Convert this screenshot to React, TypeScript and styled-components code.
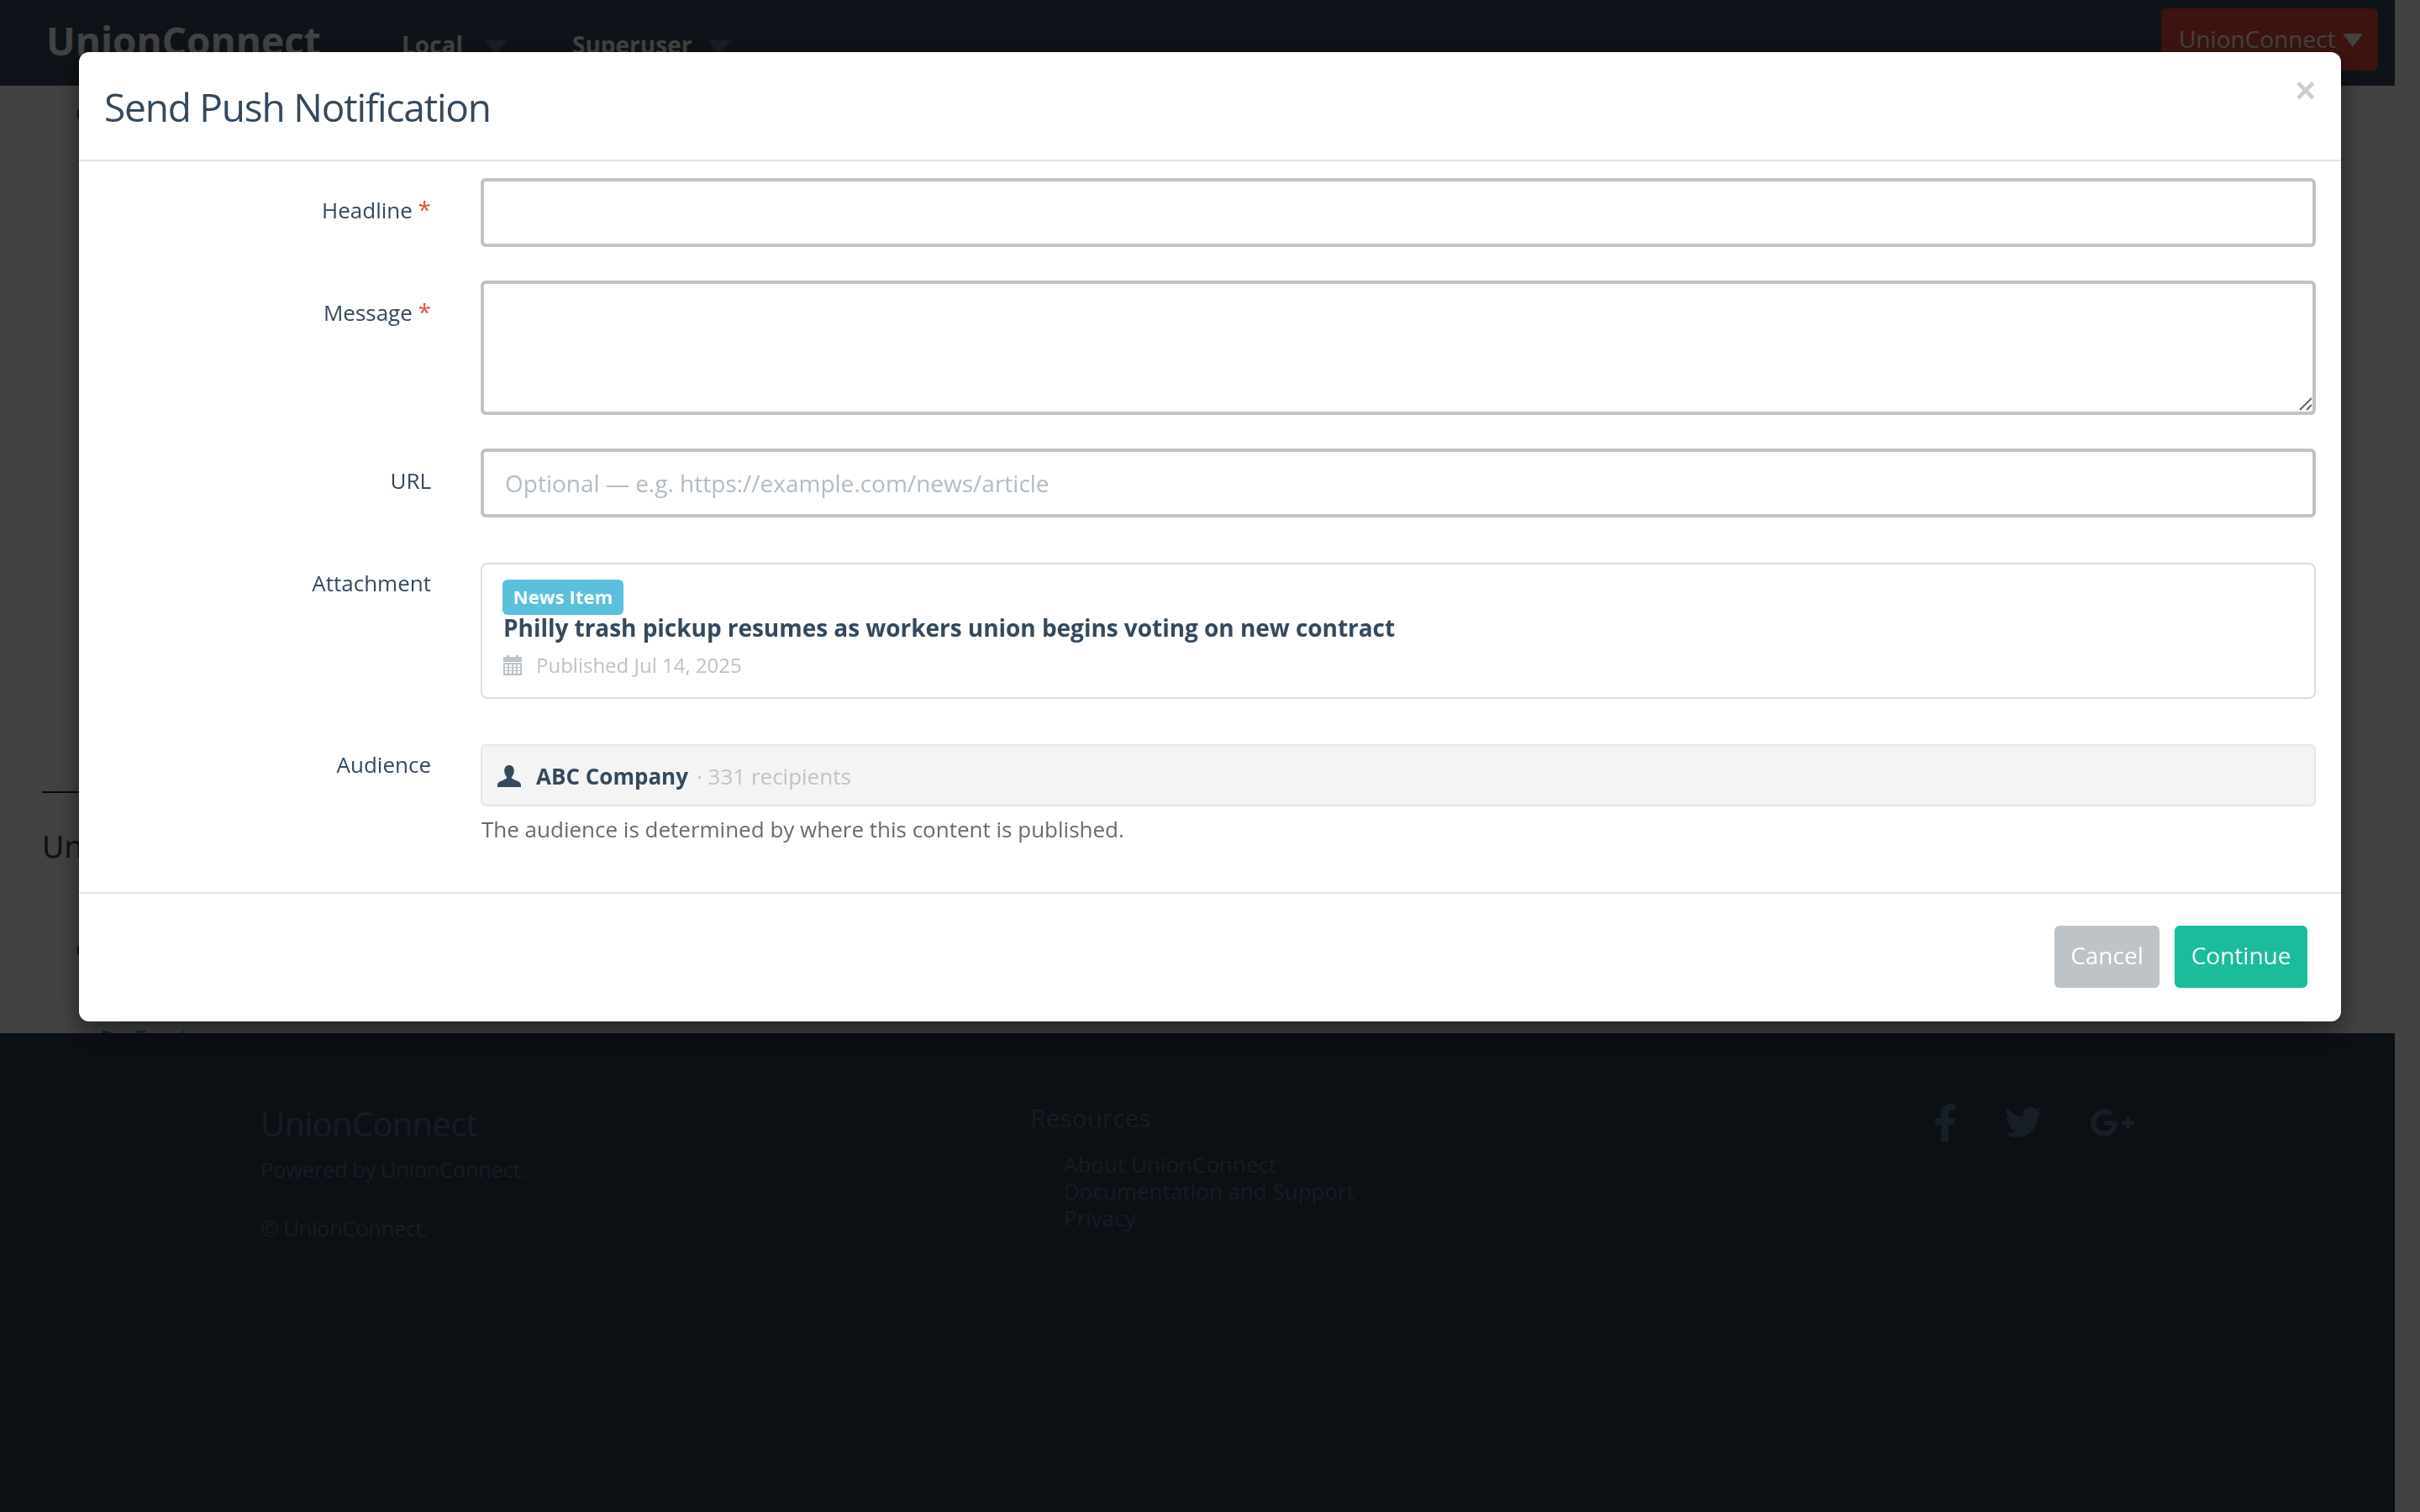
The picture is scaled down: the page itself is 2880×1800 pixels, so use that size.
import { styled, createGlobalStyle } from 'styled-components'
import { FaFacebookF, FaTwitter, FaGooglePlusG, FaRss } from 'react-icons/fa'

const GlobalStyle = createGlobalStyle`
  html, body {
    margin: 0;
    height: 1800px;
    overflow: hidden;
    background: #fff;
    font-family: "Open Sans", "Noto Sans", sans-serif;
  }

  * {
    box-sizing: border-box;
  }
`

const Page = styled.div`
  width: 2850px;
  height: 1800px;
  display: flex;
  flex-direction: column;
  color: #34495e;
`

const Navbar = styled.header`
  height: 102px;
  flex: none;
  display: flex;
  align-items: center;
  padding: 0 20px 0 55px;
  background: #34495e;
  color: #fff;
`

const Brand = styled.div`
  width: 423px;
  font-size: 46px;
  font-weight: 700;
  line-height: 1;
  margin-bottom: 6px;
`

const NavItem = styled.div<{ $gap: number }>`
  display: flex;
  align-items: center;
  gap: ${(p) => p.$gap}px;
  margin-right: 78px;
  font-size: 28px;
  font-weight: 700;
  line-height: 1;
  padding-top: 4px;
`

const NavCaret = styled.span`
  border-left: 13px solid transparent;
  border-right: 13px solid transparent;
  border-top: 18px solid #5a7690;
  margin-top: 8px;
`

const AccountButton = styled.div`
  margin-left: auto;
  margin-bottom: 8px;
  width: 258px;
  height: 74px;
  display: flex;
  align-items: center;
  gap: 8px;
  padding: 0 0 2px 21px;
  border-radius: 6px;
  background: #e74c3c;
  font-size: 28px;
`

const AccountCaret = styled.span`
  border-left: 12px solid transparent;
  border-right: 12px solid transparent;
  border-top: 16px solid #fff;
  margin-top: 4px;
`

const Main = styled.main`
  height: 1128px;
  flex: none;
  overflow: hidden;
  padding: 17px 0 0 50px;
`

const StubText = styled.div<{ $top: number }>`
  margin-top: ${(p) => p.$top}px;
  padding-left: 40px;
  font-size: 26px;
  line-height: 32px;
`

const Rule = styled.hr`
  width: 1000px;
  margin: 791px 0 0;
  border: none;
  border-top: 2px solid #222;
`

const SectionHeading = styled.h2`
  margin: 43px 0 0;
  font-family: "DejaVu Sans", sans-serif;
  font-size: 36px;
  font-weight: 400;
  line-height: 44px;
`

const FeedLink = styled.div`
  display: flex;
  align-items: center;
  gap: 14px;
  margin-top: 77px;
  padding-left: 70px;
  color: #1abc9c;
  font-family: "DejaVu Sans", sans-serif;
  font-size: 26px;
`

const SiteFooter = styled.footer`
  flex: 1;
  display: grid;
  grid-template-columns: 916px 1075px 1fr;
  align-content: start;
  padding: 84px 0 0 310px;
  background: #2c3e50;
  color: #556c8e;
  font-size: 26px;
  line-height: 32px;
`

const FooterBrand = styled.div`
  font-size: 40px;
  line-height: 48px;
  letter-spacing: -0.7px;
`

const FooterNote = styled.p`
  margin: 14px 0 38px;
  letter-spacing: -0.6px;
`

const FooterCopy = styled.div`
  letter-spacing: -0.6px;
`

const FooterHeading = styled.div`
  font-size: 30px;
  line-height: 34px;
  margin-bottom: 22px;
`

const FooterLinks = styled.ul`
  margin: 0;
  padding: 0 0 0 40px;
  list-style: none;
`

const Socials = styled.div`
  display: flex;
  align-items: center;
  height: 44px;
  color: #5c7394;
`

const FacebookIcon = styled(FaFacebookF)`
  width: 28px;
  height: 45px;
  margin-right: 57px;
`

const TwitterIcon = styled(FaTwitter)`
  width: 44px;
  height: 44px;
  margin-right: 57px;
`

const GooglePlusIcon = styled(FaGooglePlusG)`
  width: 54px;
  height: 43px;
`

const Backdrop = styled.div`
  position: fixed;
  inset: 0;
  background: rgba(0, 0, 0, 0.74);
`

const Modal = styled.div`
  position: fixed;
  top: 62px;
  left: 94px;
  right: 94px;
  height: 1154px;
  display: flex;
  flex-direction: column;
  background: #fff;
  border-radius: 12px;
  box-shadow: 0 10px 30px rgba(0, 0, 0, 0.5);
  color: #34495e;
`

const ModalHeader = styled.div`
  height: 130px;
  flex: none;
  display: flex;
  justify-content: space-between;
  align-items: flex-start;
  padding: 0 30px;
  border-bottom: 2px solid #e5e5e5;
`

const ModalTitle = styled.h4`
  margin: 35px 0 0;
  font-size: 46px;
  font-weight: 400;
  line-height: 60px;
  letter-spacing: -1.2px;
`

const CloseButton = styled.button`
  margin-top: 20px;
  padding: 0;
  border: none;
  background: none;
  color: #cdcdcd;
  font-family: "Liberation Sans", sans-serif;
  font-size: 42px;
  font-weight: 700;
  line-height: 52px;
`

const FormGrid = styled.div`
  flex: 1;
  display: grid;
  grid-template-columns: 389px 1fr;
  column-gap: 59px;
  align-content: start;
  padding: 20px 30px 0;
`

const Label = styled.label<{ $pad?: number }>`
  text-align: right;
  font-size: 26px;
  line-height: 36px;
  padding-top: ${(p) => p.$pad ?? 20}px;
`

const Required = styled.span`
  color: #e74c3c;
  font-size: 28px;
  line-height: 1;
`

const Field = styled.div<{ $gap: number }>`
  margin-bottom: ${(p) => p.$gap}px;
`

const TextInput = styled.input`
  display: block;
  width: 100%;
  height: 82px;
  padding: 0 25px;
  border: 4px solid #bdc3c7;
  border-radius: 6px;
  background: #fff;
  color: #34495e;
  font-family: inherit;
  font-size: 28px;
  outline: none;

  &::placeholder {
    color: #b2bcc5;
    opacity: 1;
  }
`

const TextAreaWrap = styled.div`
  position: relative;
`

const TextArea = styled.textarea`
  display: block;
  width: 100%;
  height: 160px;
  padding: 12px 24px;
  border: 4px solid #bdc3c7;
  border-radius: 6px;
  resize: none;
  outline: none;
`

const ResizeGrip = styled.svg`
  position: absolute;
  right: 4px;
  bottom: 5px;
`

const AttachmentCard = styled.div`
  height: 162px;
  padding: 18px 24px 0;
  border: 2px solid #ddd;
  border-radius: 8px;
`

const Badge = styled.span`
  display: block;
  width: 144px;
  height: 42px;
  border-radius: 6px;
  background: #5bc0de;
  color: #fff;
  font-size: 22px;
  font-weight: 700;
  line-height: 40px;
  letter-spacing: 0.1px;
  text-align: center;
`

const AttachmentTitle = styled.div`
  margin-top: -3px;
  padding-left: 1px;
  font-size: 28px;
  font-weight: 700;
  line-height: 36px;
  letter-spacing: -0.04px;
`

const MetaRow = styled.div`
  display: flex;
  align-items: center;
  gap: 16px;
  margin-top: 10px;
  color: #bdc3c7;
  font-size: 24px;
  line-height: 34px;
`

const AudienceBox = styled.div`
  height: 74px;
  display: flex;
  align-items: center;
  gap: 18px;
  padding: 2px 0 0 18px;
  border: 2px solid #e5e5e5;
  border-radius: 6px;
  background: #f4f4f4;
  font-size: 26px;
`

const AudienceName = styled.strong`
  font-weight: 700;
`

const Muted = styled.span`
  margin-left: 10px;
  color: #bdc3c7;
  font-weight: 400;
`

const HelpText = styled.p`
  margin: 9px 0 0 1px;
  color: #6b6b6b;
  font-size: 26px;
  line-height: 36px;
`

const ModalFooter = styled.div`
  height: 154px;
  flex: none;
  display: flex;
  justify-content: flex-end;
  gap: 18px;
  padding: 38px 40px 0 0;
  border-top: 2px solid #e5e5e5;
`

const Button = styled.button<{ $primary?: boolean }>`
  height: 74px;
  padding: 0 19.5px 4px;
  border: none;
  border-radius: 6px;
  background: ${(p) => (p.$primary ? '#1abc9c' : '#bdc3c7')};
  color: #fff;
  font-family: inherit;
  font-size: 28px;
`

const CalendarIcon = () => (
  <svg width="24" height="24" viewBox="0 0 24 24" fill="#bdc3c7">
    <rect x="5" y="0" width="3" height="4" />
    <rect x="16" y="0" width="3" height="4" />
    <rect x="1" y="2" width="22" height="6" />
    <path
      fillRule="evenodd"
      d="M1 9h22v15H1z M3 11v3h3v-3z M8 11v3h3v-3z M13 11v3h3v-3z M18 11v3h3v-3z M3 15v3h3v-3z M8 15v3h3v-3z M13 15v3h3v-3z M18 15v3h3v-3z M3 19v3h3v-3z M8 19v3h3v-3z M13 19v3h3v-3z M18 19v3h3v-3z"
    />
  </svg>
)

const UserIcon = () => (
  <svg width="28" height="26" viewBox="0 0 28 26" fill="#34495e">
    <path d="M14 0c3.6 0 5.8 2.700 5.800 6.600 0 3-1.200 5.600-2.600 7.100-.5.6-.4 1.900.4 2.300l7.600 3.600c1.800.9 2.800 2.600 2.800 4.400v2H0v-2c0-1.800 1-3.500 2.800-4.400l7.600-3.600c.8-.4.900-1.700.4-2.300C9.400 12.200 8.200 9.600 8.200 6.600 8.200 2.700 10.400 0 14 0z" />
  </svg>
)

const App = () => {
  return (
    <>
      <GlobalStyle />
      <Page>
        <Navbar>
          <Brand>UnionConnect</Brand>
          <NavItem $gap={26}>
            Local <NavCaret />
          </NavItem>
          <NavItem $gap={20}>
            Superuser <NavCaret />
          </NavItem>
          <AccountButton>
            UnionConnect <AccountCaret />
          </AccountButton>
        </Navbar>

        <Main>
          <StubText $top={0}>Campaigns</StubText>
          <Rule />
          <SectionHeading>Union News</SectionHeading>
          <StubText $top={83}>Contact</StubText>
          <FeedLink>
            <FaRss /> Feed
          </FeedLink>
        </Main>

        <SiteFooter>
          <div>
            <FooterBrand>UnionConnect</FooterBrand>
            <FooterNote>Powered by UnionConnect.</FooterNote>
            <FooterCopy>© UnionConnect.</FooterCopy>
          </div>
          <div>
            <FooterHeading>Resources</FooterHeading>
            <FooterLinks>
              <li>About UnionConnect</li>
              <li>Documentation and Support</li>
              <li>Privacy</li>
            </FooterLinks>
          </div>
          <Socials>
            <FacebookIcon />
            <TwitterIcon />
            <GooglePlusIcon />
          </Socials>
        </SiteFooter>
      </Page>

      <Backdrop />

      <Modal>
        <ModalHeader>
          <ModalTitle>Send Push Notification</ModalTitle>
          <CloseButton>×</CloseButton>
        </ModalHeader>

        <FormGrid>
          <Label>
            Headline <Required>*</Required>
          </Label>
          <Field $gap={40}>
            <TextInput />
          </Field>

          <Label>
            Message <Required>*</Required>
          </Label>
          <Field $gap={40}>
            <TextAreaWrap>
              <TextArea />
              <ResizeGrip width="16" height="16" viewBox="0 0 16 16" stroke="#666" strokeWidth="2">
                <path d="M1 15L15 1M9 15l6-6" />
              </ResizeGrip>
            </TextAreaWrap>
          </Field>

          <Label>URL</Label>
          <Field $gap={54}>
            <TextInput placeholder="Optional — e.g. https://example.com/news/article" />
          </Field>

          <Label $pad={6}>Attachment</Label>
          <Field $gap={54}>
            <AttachmentCard>
              <Badge>News Item</Badge>
              <AttachmentTitle>
                Philly trash pickup resumes as workers union begins voting on new contract
              </AttachmentTitle>
              <MetaRow>
                <CalendarIcon />
                Published Jul 14, 2025
              </MetaRow>
            </AttachmentCard>
          </Field>

          <Label $pad={6}>Audience</Label>
          <Field $gap={0}>
            <AudienceBox>
              <UserIcon />
              <AudienceName>
                ABC Company
                <Muted>· 331 recipients</Muted>
              </AudienceName>
            </AudienceBox>
            <HelpText>The audience is determined by where this content is published.</HelpText>
          </Field>
        </FormGrid>

        <ModalFooter>
          <Button>Cancel</Button>
          <Button $primary>Continue</Button>
        </ModalFooter>
      </Modal>
    </>
  )
}

export default App
